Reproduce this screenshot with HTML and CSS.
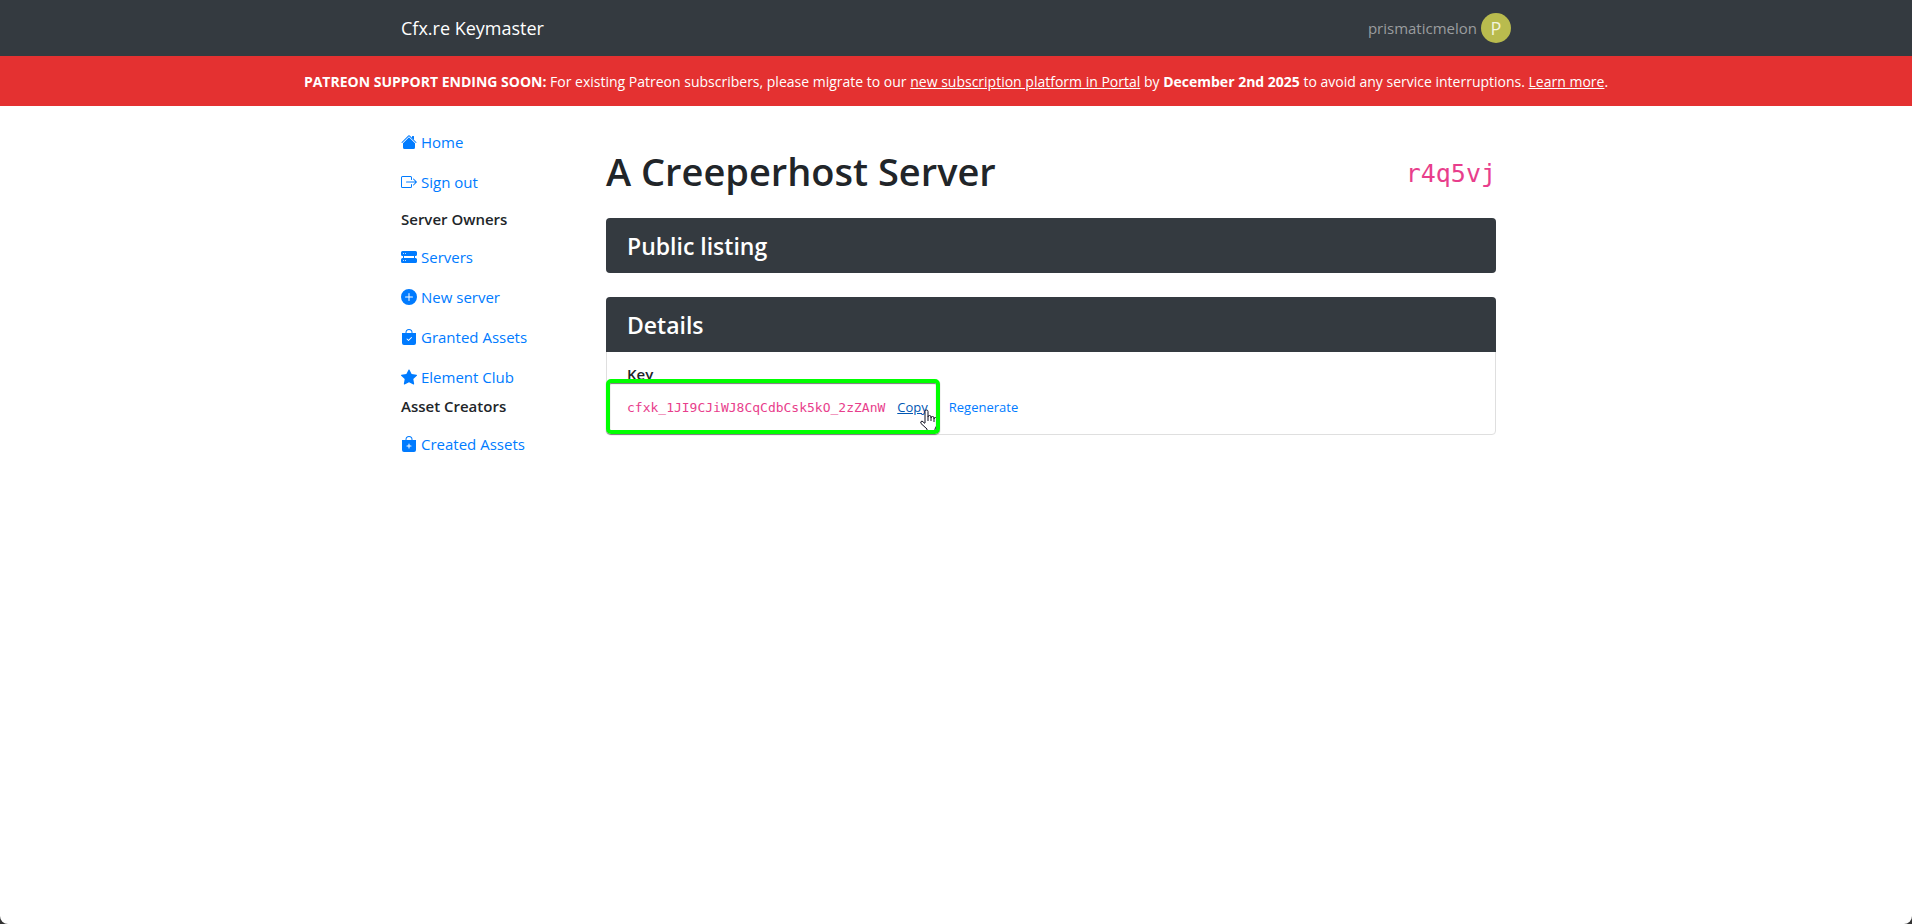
FILE: index.html
```html
<!DOCTYPE html>
<html lang="en">
<head>
  <meta charset="UTF-8">
  <title>Cfx.re Keymaster</title>
  <meta name="viewport" content="width=device-width, initial-scale=1.0">
  <link rel="stylesheet" href="styles.css">
</head>
<body>
  <header class="navbar">
    <div class="container navbar-inner">
      <a class="brand" href="#">Cfx.re Keymaster</a>
      <div class="user">
        <span>prismaticmelon</span>
        <span class="avatar">P</span>
      </div>
    </div>
  </header>

  <div class="notice">
    <strong>PATREON SUPPORT ENDING SOON:</strong> For existing Patreon subscribers, please migrate to our <a href="#">new subscription platform in Portal</a> by <strong>December 2nd 2025</strong> to avoid any service interruptions. <a href="#">Learn more</a>.
  </div>

  <div class="container layout">
    <nav class="sidebar">
      <a class="nav-link" href="#">
        <svg class="icon" viewBox="0 0 16 16"><path d="M8 3.293l6 6V13.5a1.5 1.5 0 0 1-1.5 1.5h-9A1.5 1.5 0 0 1 2 13.5V9.293l6-6zm5-.793V6l-2-2V2.5a.5.5 0 0 1 .5-.5h1a.5.5 0 0 1 .5.5z"/><path d="M7.293 1.5a1 1 0 0 1 1.414 0l6.647 6.646a.5.5 0 0 1-.708.708L8 2.207 1.354 8.854a.5.5 0 1 1-.708-.708L7.293 1.5z"/></svg>
        Home
      </a>
      <a class="nav-link" href="#">
        <svg class="icon" viewBox="0 0 16 16"><path d="M10 12.5a.5.5 0 0 1-.5.5h-8a.5.5 0 0 1-.5-.5v-9a.5.5 0 0 1 .5-.5h8a.5.5 0 0 1 .5.5v2a.5.5 0 0 0 1 0v-2A1.5 1.5 0 0 0 9.5 2h-8A1.5 1.5 0 0 0 0 3.5v9A1.5 1.5 0 0 0 1.5 14h8a1.5 1.5 0 0 0 1.5-1.5v-2a.5.5 0 0 0-1 0v2z"/><path d="M15.854 8.354a.5.5 0 0 0 0-.708l-3-3a.5.5 0 0 0-.708.708L14.293 7.5H5.5a.5.5 0 0 0 0 1h8.793l-2.147 2.146a.5.5 0 0 0 .708.708l3-3z"/></svg>
        Sign out
      </a>
      <h6 class="spaced">Server Owners</h6>
      <a class="nav-link" href="#">
        <svg class="icon" viewBox="0 0 16 16"><path fill-rule="evenodd" d="M1.5 2h13A1.5 1.5 0 0 1 16 3.5v2A1.5 1.5 0 0 1 14.5 7h-13A1.5 1.5 0 0 1 0 5.5v-2A1.5 1.5 0 0 1 1.5 2zM3 4.5a.5.5 0 1 0-1 0 .5.5 0 0 0 1 0zm2 0a.5.5 0 1 0-1 0 .5.5 0 0 0 1 0z"/><path fill-rule="evenodd" d="M1.5 9h13a1.5 1.5 0 0 1 1.5 1.5v2a1.5 1.5 0 0 1-1.5 1.5h-13A1.5 1.5 0 0 1 0 12.5v-2A1.5 1.5 0 0 1 1.5 9zM3 11.5a.5.5 0 1 0-1 0 .5.5 0 0 0 1 0zm2 0a.5.5 0 1 0-1 0 .5.5 0 0 0 1 0z"/><path d="M2 7h1v2H2zM13 7h1v2h-1z"/></svg>
        Servers
      </a>
      <a class="nav-link" href="#">
        <svg class="icon" viewBox="0 0 16 16"><path d="M16 8A8 8 0 1 1 0 8a8 8 0 0 1 16 0zM8.5 4.5a.5.5 0 0 0-1 0v3h-3a.5.5 0 0 0 0 1h3v3a.5.5 0 0 0 1 0v-3h3a.5.5 0 0 0 0-1h-3v-3z"/></svg>
        New server
      </a>
      <a class="nav-link" href="#">
        <svg class="icon" viewBox="0 0 16 16"><path fill-rule="evenodd" d="M10.5 3.5a2.5 2.5 0 0 0-5 0V4h5v-.5zm1 0V4H15v10a2 2 0 0 1-2 2H3a2 2 0 0 1-2-2V4h3.5v-.5a3.5 3.5 0 1 1 7 0zm-.646 5.354a.5.5 0 0 0-.708-.708L7.5 10.793 6.354 9.646a.5.5 0 1 0-.708.708l1.5 1.5a.5.5 0 0 0 .708 0l3-3z"/></svg>
        Granted Assets
      </a>
      <a class="nav-link" href="#">
        <svg class="icon" viewBox="0 0 16 16"><path d="M3.612 15.443c-.386.198-.824-.149-.746-.592l.83-4.73L.173 6.765c-.329-.314-.158-.888.283-.95l4.898-.696L7.538.792c.197-.39.73-.39.927 0l2.184 4.327 4.898.696c.441.062.612.636.282.95l-3.522 3.356.83 4.73c.078.443-.36.79-.746.592L8 13.187l-4.389 2.256z"/></svg>
        Element Club
      </a>
      <h6>Asset Creators</h6>
      <a class="nav-link" href="#">
        <svg class="icon" viewBox="0 0 16 16"><path fill-rule="evenodd" d="M10.5 3.5a2.5 2.5 0 0 0-5 0V4h5v-.5zm1 0V4H15v10a2 2 0 0 1-2 2H3a2 2 0 0 1-2-2V4h3.5v-.5a3.5 3.5 0 1 1 7 0zM8.5 8a.5.5 0 0 0-1 0v1.5H6a.5.5 0 0 0 0 1h1.5V12a.5.5 0 0 0 1 0v-1.5H10a.5.5 0 0 0 0-1H8.5V8z"/></svg>
        Created Assets
      </a>
    </nav>

    <main class="content">
      <div class="page-head">
        <h1>A Creeperhost Server</h1>
        <code class="server-id">r4q5vj</code>
      </div>

      <section class="card">
        <h4 class="card-header">Public listing</h4>
      </section>

      <section class="card">
        <h4 class="card-header">Details</h4>
        <div class="card-body">
          <h6>Key</h6>
          <div class="key-row">
            <code>cfxk_1JI9CJiWJ8CqCdbCsk5kO_2zZAnW</code>
            <button type="button" class="btn-link hovered">Copy</button>
            <button type="button" class="btn-link">Regenerate</button>
          </div>
          <svg class="pointer" viewBox="0 0 18 22"><path d="M6 14V2.5a1.5 1.5 0 0 1 3 0V8a1.5 1.5 0 0 1 3 0v1a1.5 1.5 0 0 1 3 0v1a1.5 1.5 0 0 1 3 0v6l-2 4v3H8v-3L2 14.5q-1-2 1-2.5l3 2.5"/><path d="M9 8v4M12 9v3M15 10v3"/></svg>
          <div class="highlight"></div>
        </div>
      </section>
    </main>
  </div>
</body>
</html>
```
FILE: styles.css
```css
* {
  box-sizing: border-box;
}

html {
  min-height: 100%;
  background: #333;
}

body {
  margin: 0;
  min-height: 100vh;
  background: #fff;
  border-radius: 0 0 8px 8px;
  color: #212529;
  font-family: "Open Sans", "Noto Sans", sans-serif;
  font-size: 15px;
  line-height: 24px;
}

h1, h4, h6 {
  margin: 0;
  font-weight: 600;
}

a {
  color: #007bff;
  text-decoration: none;
}

code {
  color: #e83e8c;
  font-family: "DejaVu Sans Mono", monospace;
  font-size: 13px;
}

.container {
  width: 100%;
  max-width: 1140px;
  margin: 0 auto;
  padding: 0 15px;
}

/* top bar */
.navbar {
  background: #343a40;
}

.navbar-inner {
  display: flex;
  align-items: center;
  justify-content: space-between;
  height: 56px;
}

.brand {
  color: #fff;
  font-size: 18px;
}

.user {
  display: flex;
  align-items: center;
  gap: 4px;
  color: #9a9d9f;
}

.avatar {
  width: 30px;
  height: 30px;
  border-radius: 50%;
  background: #b9bb4e;
  color: #f3f3dc;
  font-size: 18px;
  line-height: 30px;
  text-align: center;
}

.notice {
  padding: 14px 20px 12px;
  background: #e43131;
  color: #fff;
  font-size: 14px;
  text-align: center;
}

.notice a {
  color: #fff;
  text-decoration: underline;
}

/* page */
.layout {
  display: grid;
  grid-template-columns: 175px 1fr;
  gap: 30px;
  padding-top: 16px;
  padding-right: 30px;
}

.nav-link {
  display: flex;
  align-items: center;
  gap: 4px;
  padding: 8px 0;
}

.icon {
  width: 16px;
  height: 16px;
  fill: currentColor;
}

h6 {
  margin-bottom: 8px;
  font-size: 15px;
  line-height: 19px;
}

.spaced {
  margin-top: 8px;
}

.page-head {
  display: flex;
  align-items: center;
  justify-content: space-between;
  margin: 25px 0 23px;
}

h1 {
  font-size: 38px;
  line-height: 48px;
}

.server-id {
  padding-top: 5px;
  font-size: 25px;
}

.card {
  position: relative;
  margin-bottom: 24px;
  border: 1px solid #dfdfdf;
  border-radius: 4px;
}

.card-header {
  margin: -1px;
  padding: 14px 21px 12px;
  border-radius: 4px;
  background: #343a40;
  color: #fff;
  font-size: 23px;
  line-height: 29px;
}

.card-header:not(:last-child) {
  border-radius: 4px 4px 0 0;
}

.card-body {
  padding: 14px 20px 11px;
}

.key-row {
  display: flex;
  align-items: center;
  gap: 3px;
}

.btn-link {
  padding: 4px 8px;
  border: 1px solid transparent;
  background: none;
  color: #007bff;
  font-family: inherit;
  font-size: 13px;
  line-height: 21px;
  cursor: pointer;
}

.btn-link.hovered {
  color: #0056b3;
  text-decoration: underline;
}

/* marker frame around the key and the copy button */
.highlight {
  position: absolute;
  left: -1px;
  bottom: 0;
  width: 334px;
  height: 55px;
  border: 4px solid #0f0;
  border-radius: 5px;
  box-shadow: 0 1px 1px #777, inset 0 1px 1px #777;
}

.pointer {
  position: absolute;
  left: 312px;
  bottom: 3px;
  width: 18px;
  height: 22px;
  fill: #fff;
  stroke: #112;
}
```
